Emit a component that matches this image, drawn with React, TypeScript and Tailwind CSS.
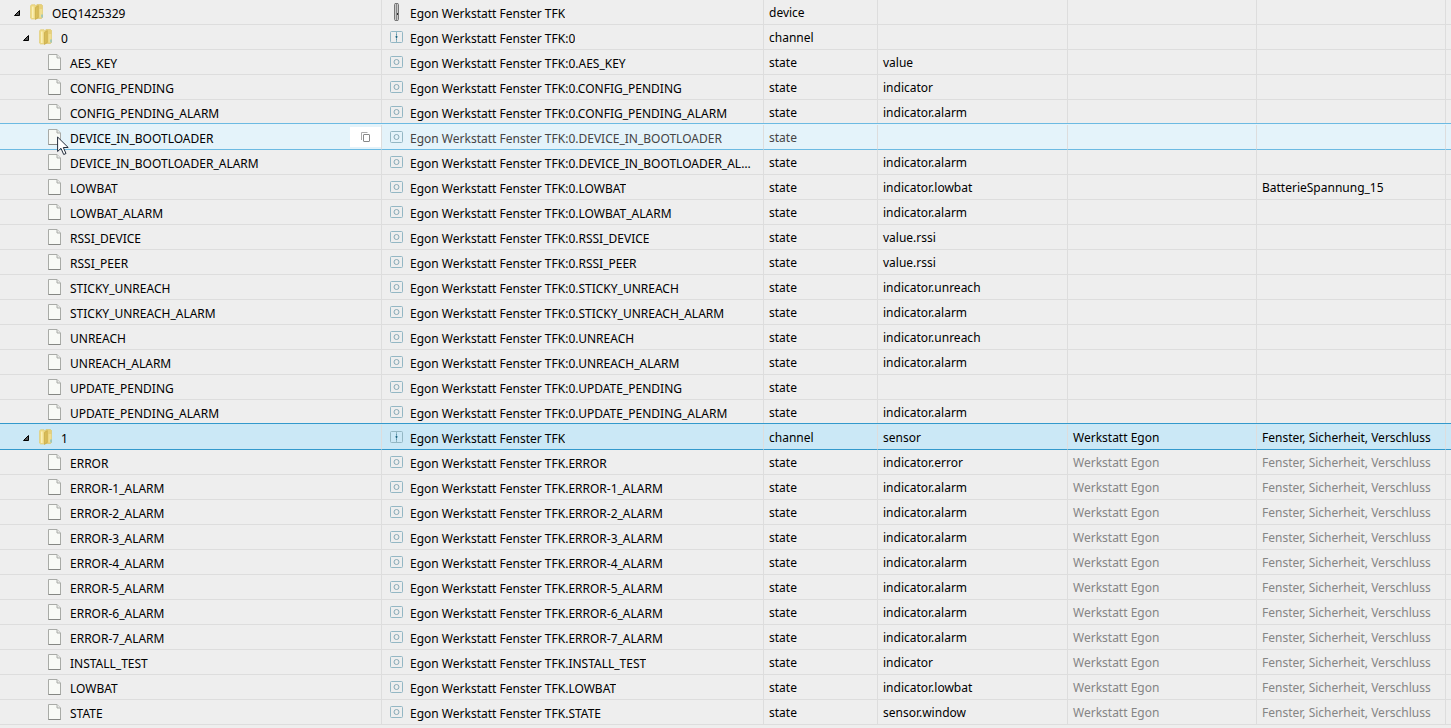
import React from "react";

type Kind = "device" | "channel" | "state";
type Row = {
  id: string;
  name: string;
  type: Kind;
  role?: string;
  room?: string;
  func?: string;
  inherited?: boolean;
  mode?: "hover" | "selected";
};

const base = "Egon Werkstatt Fenster TFK";

const channel0: [string, string?, string?][] = [
  ["AES_KEY", "value"],
  ["CONFIG_PENDING", "indicator"],
  ["CONFIG_PENDING_ALARM", "indicator.alarm"],
  ["DEVICE_IN_BOOTLOADER"],
  ["DEVICE_IN_BOOTLOADER_ALARM", "indicator.alarm"],
  ["LOWBAT", "indicator.lowbat", "BatterieSpannung_15"],
  ["LOWBAT_ALARM", "indicator.alarm"],
  ["RSSI_DEVICE", "value.rssi"],
  ["RSSI_PEER", "value.rssi"],
  ["STICKY_UNREACH", "indicator.unreach"],
  ["STICKY_UNREACH_ALARM", "indicator.alarm"],
  ["UNREACH", "indicator.unreach"],
  ["UNREACH_ALARM", "indicator.alarm"],
  ["UPDATE_PENDING"],
  ["UPDATE_PENDING_ALARM", "indicator.alarm"],
];

const channel1: [string, string][] = [
  ["ERROR", "indicator.error"],
  ["ERROR-1_ALARM", "indicator.alarm"],
  ["ERROR-2_ALARM", "indicator.alarm"],
  ["ERROR-3_ALARM", "indicator.alarm"],
  ["ERROR-4_ALARM", "indicator.alarm"],
  ["ERROR-5_ALARM", "indicator.alarm"],
  ["ERROR-6_ALARM", "indicator.alarm"],
  ["ERROR-7_ALARM", "indicator.alarm"],
  ["INSTALL_TEST", "indicator"],
  ["LOWBAT", "indicator.lowbat"],
  ["STATE", "sensor.window"],
];

const room = "Werkstatt Egon";
const func = "Fenster, Sicherheit, Verschluss";

const rows: Row[] = [
  { id: "OEQ1425329", name: base, type: "device" },
  { id: "0", name: `${base}:0`, type: "channel" },
  ...channel0.map(([id, role, fn]): Row => ({
    id,
    name: `${base}:0.${id}`,
    type: "state",
    role,
    func: fn,
    mode: id === "DEVICE_IN_BOOTLOADER" ? "hover" : undefined,
  })),
  { id: "1", name: base, type: "channel", role: "sensor", room, func, mode: "selected" },
  ...channel1.map(([id, role]): Row => ({
    id,
    name: `${base}.${id}`,
    type: "state",
    role,
    room,
    func,
    inherited: true,
  })),
];

function Arrow() {
  return (
    <svg width="6" height="6" viewBox="0 0 6 6" className="block">
      <path d="M5.500 0.500V5.500H0.500z" fill="#555" stroke="#000" strokeWidth="1" strokeLinejoin="round" />
    </svg>
  );
}

function Folder() {
  return (
    <svg width="14" height="16" viewBox="0 0 14 16" className="block shrink-0">
      <path d="M6 1.500 7 .500h4.500l1 1V13.500l-1 1H6z" fill="#e8d078" stroke="#dcc468" strokeWidth=".6" />
      <path d="M9.500 5h2.800v8.500h-2.800z" fill="#f0df92" />
      <path d="M11.500 10.500h1v3h-1z" fill="#62b7dc" />
      <path d="M.4 2 1.500 .7H5l1 1V15H1.500l-1.100-1z" fill="#efdb86" stroke="#dfc970" strokeWidth=".6" />
      <path d="M2 2.500h1.600V14H2z" fill="#faf0b8" />
      <path d="m5.500 3.500 2.800-2v12L5.500 15.500z" fill="#d9bd58" stroke="#bd9f3e" strokeWidth=".5" />
    </svg>
  );
}

function FileIcon() {
  return (
    <svg width="14" height="16" viewBox="0 0 14 16" className="block shrink-0">
      <path d="M.5.500h8.500l3.500 3.500v11.500H.5z" fill="#f8faf6" stroke="#a9aba7" />
      <path d="M.5 15.500h12" stroke="#858783" />
      <path d="M9 .5v3.500h3.500" fill="#e9ebe8" stroke="#aaaca8" />
    </svg>
  );
}

function DeviceIcon() {
  return (
    <svg width="5" height="18" viewBox="0 0 5 18" className="block">
      <path d="M1 .5h3l.5 1v15l-.5 1H1l-.5-1v-15z" fill="#c9c9c9" stroke="#777" />
      <path d="M2.500 1v16" stroke="#888" />
      <path d="M3 10h1v2H3z" fill="#333" />
    </svg>
  );
}

function ChannelIcon() {
  return (
    <svg width="13" height="12" viewBox="0 0 13 12" className="block">
      <rect x=".5" y=".5" width="12" height="11" rx="1" fill="none" stroke="#93b7c4" />
      <path d="M6.500 1v2M6.500 9v2" stroke="#8fb5c3" />
      <path d="M6.500 3v1M6.500 8v1" stroke="#5b97ad" />
      <path d="M5.500 5h2v1.500h-2z" fill="#3c7d95" />
      <path d="M6 4.500h1v3H6z" fill="#1e6580" />
    </svg>
  );
}

function StateIcon() {
  return (
    <svg width="13" height="12" viewBox="0 0 13 12" className="block">
      <rect x=".5" y=".5" width="12" height="11" rx="1" fill="none" stroke="#93b7c4" />
      <circle cx="6.500" cy="6" r="2.500" fill="none" stroke="#86a9b6" />
    </svg>
  );
}

function CopyIcon() {
  return (
    <svg width="9" height="10" viewBox="0 0 9 10" className="block">
      <path d="M.5 8V.5H6.500" fill="none" stroke="#aaa" />
      <rect x="2.500" y="2.500" width="6" height="7" rx=".5" fill="#fff" stroke="#888" />
    </svg>
  );
}

function Pointer() {
  return (
    <svg width="13" height="20" viewBox="0 0 13 20" className="pointer-events-none absolute left-[57px] top-[11px] z-10">
      <path d="M.6 1v14.500L4 12.300l2.700 6.200 2.300-1-2.700-6h4.900z" fill="#fff" stroke="#222b3a" />
    </svg>
  );
}

const kindIcon = { device: <DeviceIcon />, channel: <ChannelIcon />, state: <StateIcon /> };
const indent = { device: "pl-[14px]", channel: "pl-[23px]", state: "pl-[48px]" };
const tone = {
  plain: "border-b-[#dddddd]",
  hover: "border-b-[#6cbae2] bg-[#e4f3fa] shadow-[0_-1px_0_#e4f3fa,0_-2px_0_#6cbae2]",
  selected: "border-b-[#3399cc] bg-[#cbe8f6] shadow-[0_-1px_0_#cbe8f6,0_-2px_0_#3399cc]",
};

function TreeRow({ row }: { row: Row }) {
  const cell = `h-[25px] border-b border-r border-r-[#dddddd] p-0 align-top ${tone[row.mode ?? "plain"]}`;
  const text = "block truncate pl-[5px] pt-[2px] leading-[22px]";
  const ink = row.mode === "hover" ? "text-[#444444]" : "text-black";
  const soft = row.inherited ? "text-[#858585]" : "text-black";
  return (
    <tr>
      <td className={`${cell} relative`}>
        <div className={`flex h-6 items-center ${indent[row.type]}`}>
          {row.type === "state" ? (
            <FileIcon />
          ) : (
            <button type="button" aria-label={`Collapse ${row.id}`} className="mr-[10px] pt-[2px]">
              <Arrow />
            </button>
          )}
          {row.type !== "state" && <Folder />}
          <span className="ml-2 pt-1 leading-6">{row.id}</span>
          {row.mode === "hover" && (
            <button
              type="button"
              aria-label="Copy name"
              className="ml-auto flex h-5 w-[31px] items-center justify-center bg-white"
            >
              <CopyIcon />
            </button>
          )}
        </div>
        {row.mode === "hover" && <Pointer />}
      </td>
      <td className={cell}>
        <div className={`flex h-6 items-center ${ink}`}>
          <span className="ml-2 flex w-[13px] shrink-0 justify-center">{kindIcon[row.type]}</span>
          <span className="ml-[7px] mr-2 truncate pt-1 leading-6">{row.name}</span>
        </div>
      </td>
      <td className={cell}>
        <span className={`${text} ${ink}`}>{row.type}</span>
      </td>
      <td className={cell}>
        <span className={text}>{row.role}</span>
      </td>
      <td className={cell}>
        <span className={`${text} ${soft}`}>{row.room}</span>
      </td>
      <td className={cell}>
        <span className={`${text} ${soft}`}>{row.func}</span>
      </td>
      <td className={`${cell} border-r-0`} />
    </tr>
  );
}

export default function App() {
  return (
    <main className="h-screen overflow-hidden bg-[#eeeeee] font-['Noto_Sans',sans-serif] text-[12px] text-black">
      <table className="w-full table-fixed border-separate border-spacing-0">
        <colgroup>
          <col className="w-[382px]" />
          <col className="w-[382px]" />
          <col className="w-[114px]" />
          <col className="w-[190px]" />
          <col className="w-[189px]" />
          <col className="w-[189px]" />
          <col className="w-[5px]" />
        </colgroup>
        <tbody>
          {rows.map((row, i) => (
            <TreeRow key={i} row={row} />
          ))}
        </tbody>
      </table>
    </main>
  );
}
